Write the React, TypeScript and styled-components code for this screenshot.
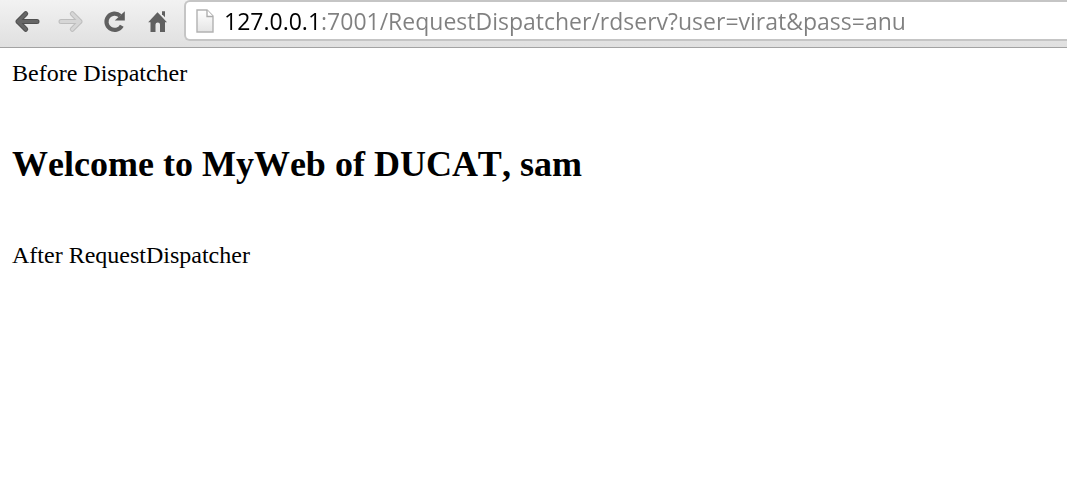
import React, { useState } from "react";
import styled, { createGlobalStyle } from "styled-components";

const GlobalStyle = createGlobalStyle`
  * { box-sizing: border-box; }
  body { margin: 0; background: #fff; }
`;

const Toolbar = styled.header`
  display: flex;
  align-items: flex-start;
  height: 48px;
  padding-left: 5px;
  background: linear-gradient(#f2f2f2, #e0e0e0);
  border-bottom: 1px solid #a3a3a3;
  overflow: hidden;
`;

const NavButtons = styled.nav`
  display: flex;
  flex: none;
  width: 179px;
`;

const NavButton = styled.button`
  display: flex;
  align-items: center;
  justify-content: center;
  width: 44px;
  height: 43px;
  padding: 0;
  border: 0;
  background: none;
`;

const AddressBar = styled.form`
  display: flex;
  align-items: center;
  flex: 1;
  min-width: 0;
  height: 41px;
  padding-left: 10px;
  gap: 10px;
  background: #fff;
  border: 2px solid #c5c5c5;
  border-right: 0;
  border-radius: 6px 0 0 6px;
`;

const AddressInput = styled.input`
  flex: 1;
  min-width: 0;
  height: 37px;
  padding: 0;
  border: 0;
  outline: 0;
  font: 23px/36px "Open Sans", sans-serif;
  color: transparent;
  caret-color: #000;
  background: linear-gradient(90deg, #000 96px, #808080 96px);
  background-clip: text;
  -webkit-background-clip: text;
`;

const Page = styled.main`
  padding: 12px;
  color: #000;
  font: 24px/27px "Liberation Serif", serif;
`;

const Line = styled.p`
  margin: 0;
`;

const Heading = styled.h2`
  margin: 57px 0;
  font-size: 36px;
  line-height: 41px;
  font-kerning: none;
`;

const arrow = "M11.7 3.7 L4 11.5 L11.7 19.3 M4 11.5 H23";

function Back() {
  return (
    <svg width="26" height="24" viewBox="0 0 26 24" fill="none" strokeLinecap="round" strokeLinejoin="round">
      <path d={arrow} stroke="#505050" strokeWidth="5" />
      <path d={arrow} stroke="#666" strokeWidth="3" />
    </svg>
  );
}

function Forward() {
  return (
    <svg width="26" height="24" viewBox="0 0 26 24" fill="none" strokeLinecap="round" strokeLinejoin="round">
      <g transform="translate(26 0) scale(-1 1)">
        <path d={arrow} stroke="#bdbdbd" strokeWidth="5" />
        <path d={arrow} stroke="#d6d6d6" strokeWidth="3" />
      </g>
    </svg>
  );
}

function Reload() {
  return (
    <svg width="24" height="24" viewBox="0 0 24 24">
      <path d="M18.8 15.8 A8.2 8.2 0 1 1 17.2 5.7" fill="none" stroke="#606060" strokeWidth="4.2" />
      <path d="M21.8 1.2 V10.4 H11.8 Z" fill="#5c5c5c" />
    </svg>
  );
}

function Home() {
  return (
    <svg width="22" height="24" viewBox="1 0 22 24" fill="#606060">
      <path d="M10.5 2.3 L20 12.3 H18 V22 H13 V14.5 Q13 12.5 10.8 12.5 Q8.5 12.5 8.5 14.5 V22 H3.5 V12.3 H1.2 Z" />
      <path d="M15 1.3 H18 V7.2 L15 4.3 Z" />
    </svg>
  );
}

function Document() {
  return (
    <svg width="18" height="24" viewBox="0 0 18 24">
      <defs>
        <linearGradient id="paper" x1="0" y1="0" x2="0" y2="1">
          <stop offset="0" stopColor="#fff" />
          <stop offset="1" stopColor="#e4e4e4" />
        </linearGradient>
      </defs>
      <path d="M1 1 H11 L17 7 V23 H1 Z" fill="url(#paper)" stroke="#b2b2b2" strokeWidth="1.4" />
      <path d="M11 1 V7.5 H17" fill="#fff" stroke="#aaa" strokeWidth="1.3" />
    </svg>
  );
}

export default function App() {
  const [address, setAddress] = useState(
    "127.0.0.1:7001/RequestDispatcher/rdserv?user=virat&pass=anu"
  );
  return (
    <>
      <GlobalStyle />
      <Toolbar>
        <NavButtons aria-label="Browser navigation">
          <NavButton type="button" aria-label="Back"><Back /></NavButton>
          <NavButton type="button" aria-label="Forward" disabled><Forward /></NavButton>
          <NavButton type="button" aria-label="Reload"><Reload /></NavButton>
          <NavButton type="button" aria-label="Home"><Home /></NavButton>
        </NavButtons>
        <AddressBar onSubmit={(e) => e.preventDefault()}>
          <Document />
          <AddressInput
            type="text"
            aria-label="Address"
            spellCheck={false}
            value={address}
            onChange={(e) => setAddress(e.target.value)}
          />
        </AddressBar>
      </Toolbar>
      <Page>
        <Line>Before Dispatcher</Line>
        <Heading>Welcome to MyWeb of DUCAT, sam</Heading>
        <Line>After RequestDispatcher</Line>
      </Page>
    </>
  );
}
